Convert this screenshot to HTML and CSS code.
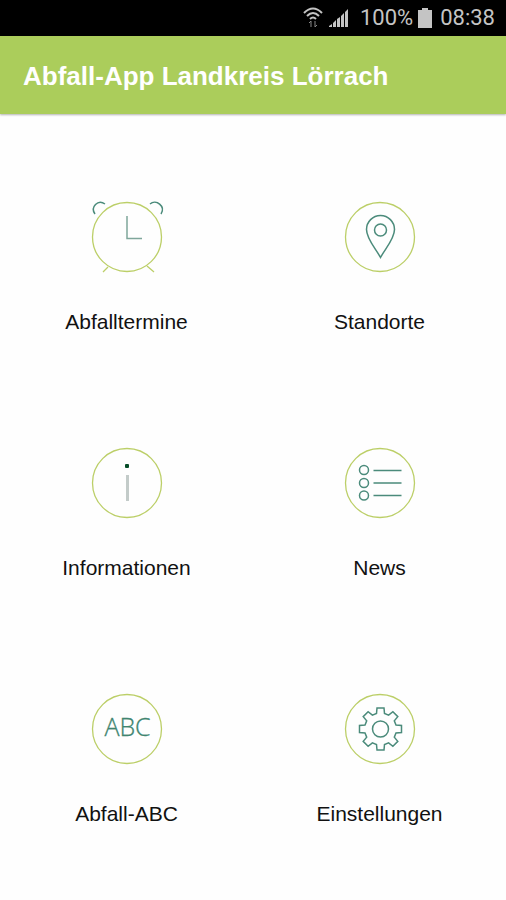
FILE: index.html
```
<!DOCTYPE html>
<html lang="de">
<head>
    <meta charset="UTF-8">
    <meta name="viewport" content="width=device-width, initial-scale=1.0">
    <title>Abfall-App Landkreis Lörrach</title>
    <link rel="stylesheet" href="styles.css">
</head>
<body>
    <!-- Statusleiste -->
    <div class="status">
        <svg class="wifi" width="20" height="22" viewBox="0 0 20 22">
            <path d="M1 6Q10 -3 19 6M4 9Q10 3 16 9M7 12Q10 9 13 12"/>
            <path class="thin" d="M8 20V14M6 16L8 14M12 14V20M14 18L12 20"/>
        </svg>
        <svg class="signal" width="20" height="18" viewBox="0 0 20 18">
            <path d="M0 18V17L3 15V18ZM4 18V14L7 11V18ZM8 18V10L11 8V18ZM12 18V7L15 4V18ZM16 18V3L19 0V18Z"/>
        </svg>
        <span class="percent">100%</span>
        <svg class="battery" width="14" height="20" viewBox="0 0 14 20">
            <path d="M4 0H10V2H14V20H0V2H4Z"/>
        </svg>
        <span class="time">08:38</span>
    </div>

    <header class="header">
        <h1>Abfall-App Landkreis Lörrach</h1>
    </header>

    <!-- Menü -->
    <nav class="menu">
        <a class="tile" href="#termine">
            <svg class="icon" viewBox="0 0 80 80">
                <circle class="ring" cx="40" cy="40" r="34.5"/>
                <path class="ring" d="M21 70L16 75M60 69L67 75"/>
                <path class="line" d="M8 17C3 10 11 2 18 7M63 7C69 2 79 9 74 17"/>
                <path class="line soft" d="M40 19V41.5H55"/>
            </svg>
            <span>Abfalltermine</span>
        </a>
        <a class="tile" href="#standorte">
            <svg class="icon" viewBox="0 0 80 80">
                <circle class="ring" cx="40" cy="40" r="34.5"/>
                <path class="line" d="M40.5 60.5C36 52 26.5 42 26.5 32.5A14 14 0 0 1 54.5 32.5C54.5 42 45 52 40.5 60.5Z"/>
                <circle class="line" cx="40.5" cy="33" r="6"/>
            </svg>
            <span>Standorte</span>
        </a>
        <a class="tile" href="#informationen">
            <svg class="icon" viewBox="0 0 80 80">
                <circle class="ring" cx="40" cy="40" r="34.5"/>
                <rect class="dot" x="38" y="21" width="4" height="4" rx="1"/>
                <path class="stem" d="M40.5 32V58"/>
            </svg>
            <span>Informationen</span>
        </a>
        <a class="tile" href="#news">
            <svg class="icon" viewBox="0 0 80 80">
                <circle class="ring" cx="40" cy="40" r="34.5"/>
                <circle class="line" cx="24" cy="27" r="4.5"/>
                <circle class="line" cx="24" cy="40" r="4.5"/>
                <circle class="line" cx="24" cy="52.5" r="4.5"/>
                <path class="line" d="M33.5 27.5H61.5M33.5 40H61.5M33.5 52.5H61.5"/>
            </svg>
            <span>News</span>
        </a>
        <a class="tile" href="#abc">
            <svg class="icon" viewBox="0 0 80 80">
                <circle class="ring" cx="40" cy="40" r="34.5"/>
                <text class="abc" x="40.5" y="47">ABC</text>
            </svg>
            <span>Abfall-ABC</span>
        </a>
        <a class="tile" href="#einstellungen">
            <svg class="icon" viewBox="0 0 80 80">
                <circle class="ring" cx="40" cy="40" r="34.5"/>
                <g transform="translate(40.5 40)">
                    <path class="line" d="M-3.5 -21H3.5L4 -15.5L8.1 -13.8L12.4 -17.3L17.3 -12.4L13.8 -8.1L15.5 -4L21 -3.5V3.5L15.5 4L13.8 8.1L17.3 12.4L12.4 17.3L8.1 13.8L4 15.5L3.5 21H-3.5L-4 15.5L-8.1 13.8L-12.4 17.3L-17.3 12.4L-13.8 8.1L-15.5 4L-21 3.5V-3.5L-15.5 -4L-13.8 -8.1L-17.3 -12.4L-12.4 -17.3L-8.1 -13.8L-4 -15.5Z"/>
                    <circle class="line" r="8"/>
                </g>
            </svg>
            <span>Einstellungen</span>
        </a>
    </nav>
</body>
</html>
```
FILE: styles.css
```
*{
    box-sizing: border-box;
    margin: 0;
    padding: 0;
}
body{
    background: #fefefe;
    color: #111;
    font-family: "Liberation Sans", Arial, sans-serif;
}
.status{
    display: flex;
    align-items: center;
    justify-content: flex-end;
    height: 36px;
    padding-right: 11px;
    background: #000;
    color: #c4c4c4;
    font-family: Roboto, sans-serif;
    font-size: 22px;
    line-height: 36px;
}
.wifi{
    margin-right: 6px;
    fill: none;
    stroke: #c4c4c4;
    stroke-width: 2;
}
.wifi .thin{
    stroke: #888;
    stroke-width: 1;
}
.signal,
.battery{
    fill: #c4c4c4;
}
.percent{
    margin: 0 5px 0 11px;
}
.time{
    margin-left: 8px;
}
.header{
    padding: 25px 23px 23px;
    background: #abcd5b;
    color: #fff;
    box-shadow: 0 1px 2px rgba(0, 0, 0, 0.3);
}
.header h1{
    font-size: 26px;
    line-height: 30px;
}
.menu{
    display: grid;
    grid-template-columns: 1fr 1fr;
}
.tile{
    display: flex;
    flex-direction: column;
    align-items: center;
    gap: 33px;
    padding: 83px 0 26px;
    color: inherit;
    font-size: 21px;
    line-height: 24px;
    text-decoration: none;
}
.icon{
    width: 80px;
    height: 80px;
    fill: none;
}
.ring{
    stroke: #bccf68;
    stroke-width: 1.3;
}
.line{
    stroke: #4b8b7b;
    stroke-width: 1.5;
}
.soft{
    stroke: #7fa69b;
}
.stem{
    stroke: #c3cbc9;
    stroke-width: 3;
}
.dot{
    fill: #064d28;
}
.abc{
    fill: #3f8570;
    stroke: #3f8570;
    stroke-width: 0.3;
    font-family: "Open Sans", sans-serif;
    font-size: 25px;
    font-weight: 300;
    text-anchor: middle;
}
```
